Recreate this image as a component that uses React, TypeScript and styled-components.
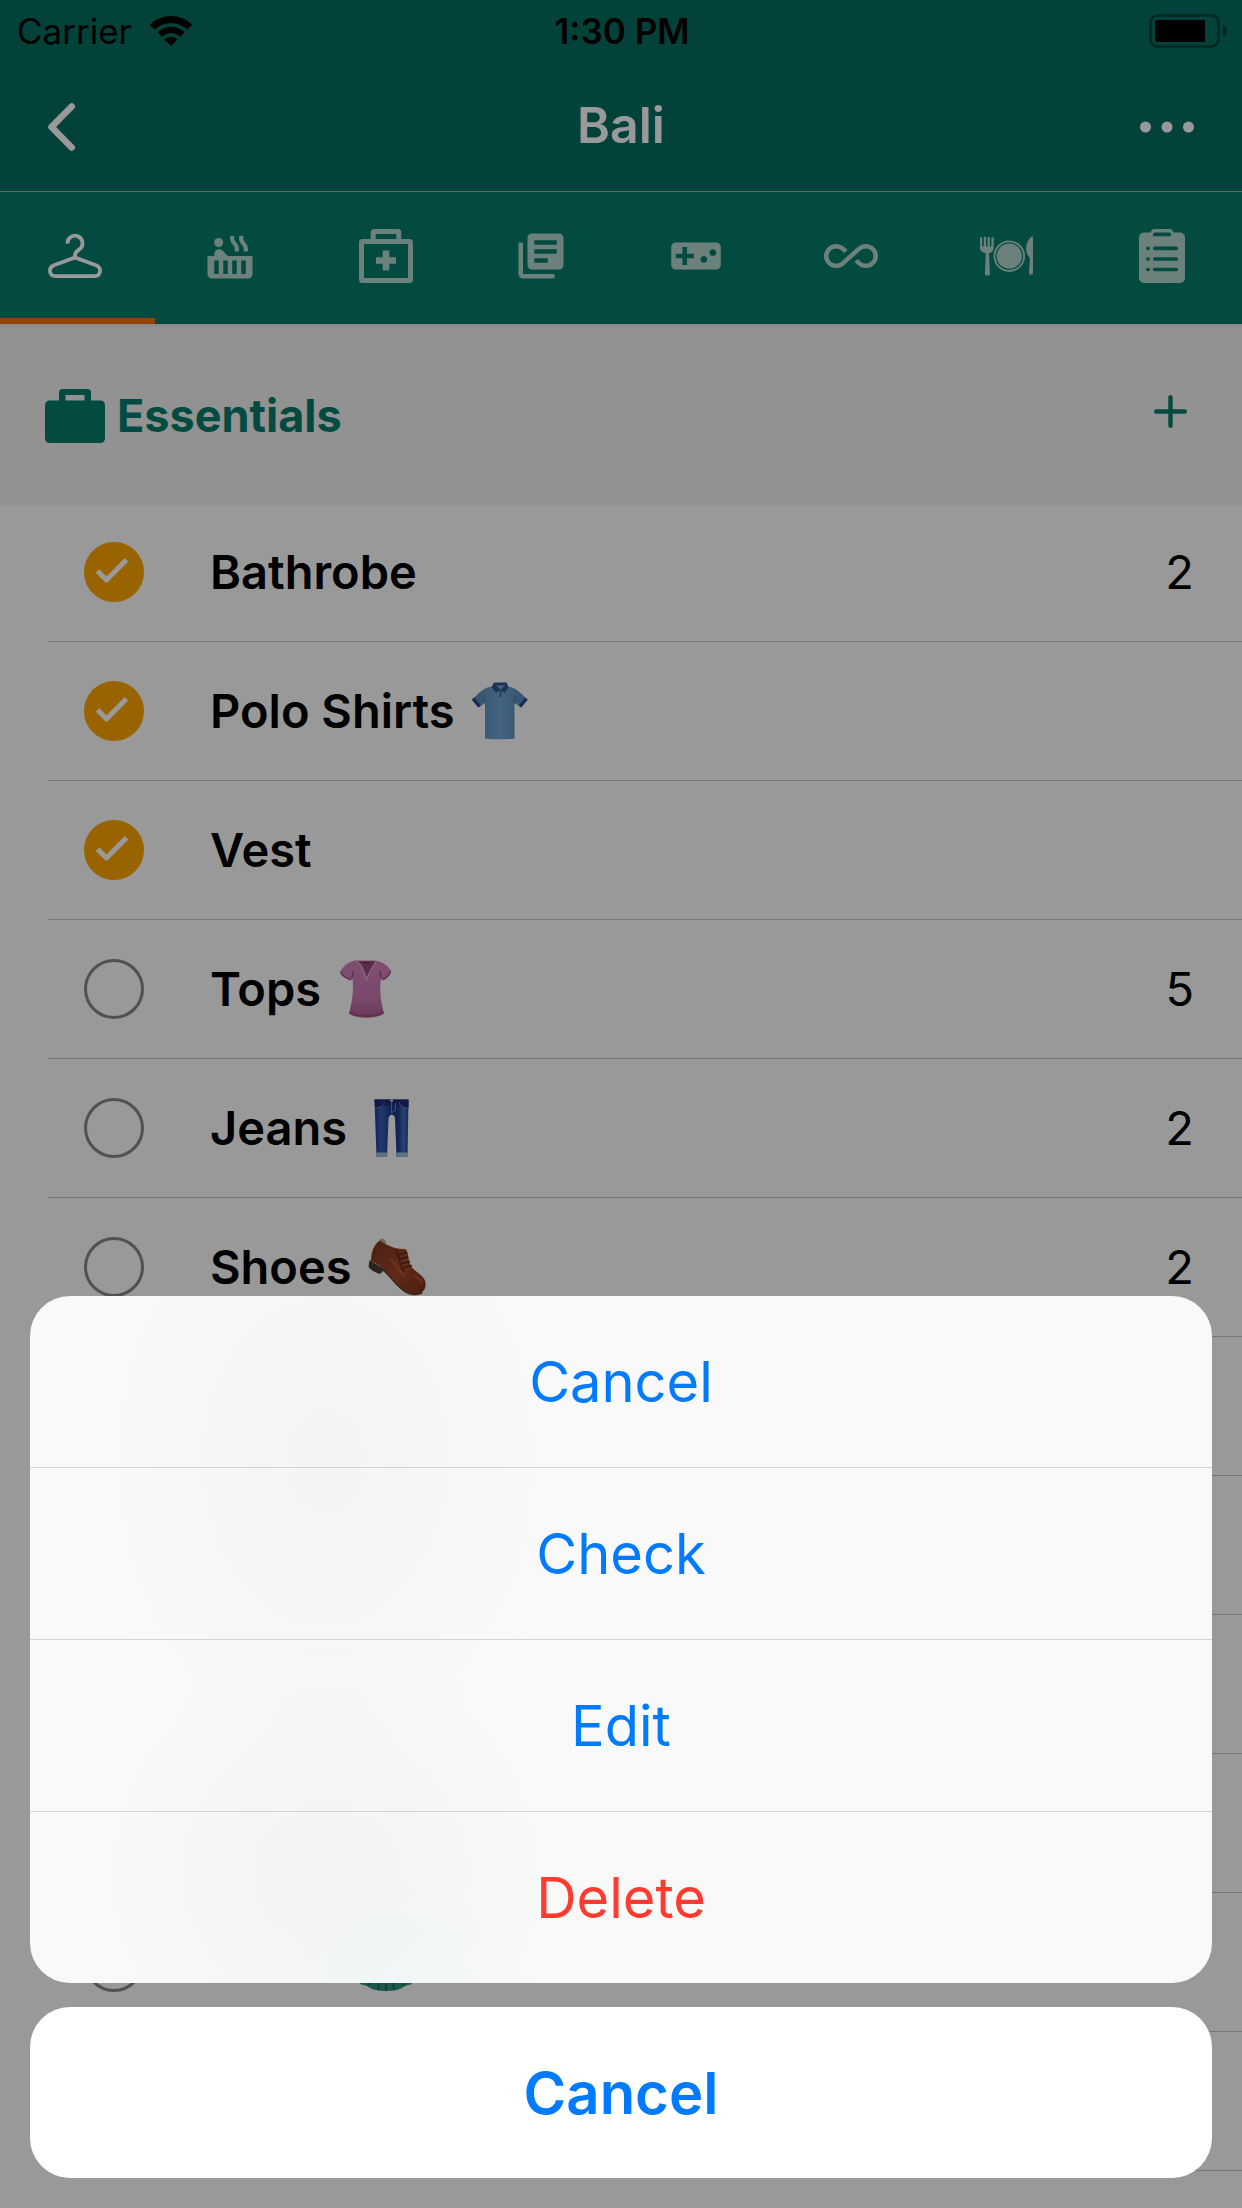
import React, { useState } from "react";
import styled, { createGlobalStyle } from "styled-components";
import {
  MdAllInclusive,
  MdHotTub,
  MdLibraryBooks,
  MdVideogameAsset,
} from "react-icons/md";

const teal = "#057d6c";
const tealDark = "#056e61";

const GlobalStyle = createGlobalStyle`
  *, *::before, *::after { box-sizing: border-box; }
  body {
    margin: 0;
    background: #fff;
    color: #000;
    font-family: Inter, "Liberation Sans", sans-serif;
  }
  button {
    margin: 0;
    padding: 0;
    border: 0;
    background: none;
    color: inherit;
    font: inherit;
    cursor: pointer;
  }
  svg { display: block; flex: none; }
`;

const Page = styled.div`
  min-height: 100vh;
  display: flex;
  flex-direction: column;
`;

const TopBar = styled.header`
  background: ${tealDark};
  border-bottom: 1px solid #a7a7ab;
`;

const StatusBar = styled.div`
  display: grid;
  grid-template-columns: 1fr auto 1fr;
  align-items: center;
  height: 60px;
  padding: 2px 15px 0 17px;
  font-size: 35px;
  line-height: 40px;
`;

const Carrier = styled.div`
  display: flex;
  align-items: center;
  gap: 18px;
`;

const Clock = styled.time`
  font-weight: 600;
`;

const BatterySlot = styled.div`
  display: flex;
  justify-content: flex-end;
`;

const NavBar = styled.nav`
  display: grid;
  grid-template-columns: 1fr auto 1fr;
  align-items: center;
  height: 131px;
  padding: 2px 48px 0;
  color: #fff;
`;

const Title = styled.h1`
  margin: 0;
  padding-bottom: 4px;
  font-size: 50px;
  line-height: 60px;
  font-weight: 600;
`;

const NavButton = styled.button<{ $end?: boolean }>`
  justify-self: ${(p) => (p.$end ? "end" : "start")};
`;

const Tabs = styled.div`
  display: grid;
  grid-template-columns: repeat(8, 1fr);
  height: 132px;
  background: ${teal};
`;

const Tab = styled.button<{ $active: boolean }>`
  display: flex;
  align-items: center;
  justify-content: center;
  padding: 0 5px 5px 0;
  color: ${(p) => (p.$active ? "#fff" : "#b4d7cf")};
  box-shadow: ${(p) => (p.$active ? "inset 0 -6px #fa6e00" : "none")};
`;

const SectionHeader = styled.div`
  position: relative;
  z-index: 1;
  display: flex;
  align-items: center;
  gap: 12px;
  height: 181px;
  margin-bottom: -2px;
  padding: 2px 55px 0 45px;
  background: linear-gradient(#e4e4e4, #f3f3f3 4px);
  color: ${teal};
`;

const SectionTitle = styled.h2`
  flex: 1;
  margin: 0;
  font-size: 45px;
  line-height: 54px;
  font-weight: 700;
`;

const AddButton = styled.button`
  padding-bottom: 8px;
`;

const List = styled.ul`
  margin: 0;
  padding: 0 0 0 48px;
  list-style: none;
`;

const Row = styled.li`
  display: flex;
  align-items: center;
  height: 139px;
  padding: 0 48px 0 36px;
  border-bottom: 1px solid #c8c7cc;
  font-size: 47px;
  line-height: 58px;
`;

const ItemLabel = styled.label`
  display: flex;
  flex: 1;
  align-items: center;
`;

const TickCell = styled.span`
  display: grid;
  margin-right: 66px;
  > * { grid-area: 1 / 1; }
  svg { pointer-events: none; }
`;

const Tick = styled.input`
  appearance: none;
  width: 60px;
  height: 60px;
  margin: 0;
  border: 3px solid #878787;
  border-radius: 50%;
  &:checked {
    border-color: #ffa500;
    background: #ffa500;
  }
`;

const ItemName = styled.span<{ $width?: number }>`
  min-width: ${(p) => (p.$width ? `${p.$width}px` : "0")};
  margin-right: 15px;
  font-weight: 600;
`;

const Quantity = styled.span``;

const Backdrop = styled.div`
  position: fixed;
  inset: 0;
  z-index: 2;
  display: flex;
  flex-direction: column;
  justify-content: flex-end;
  gap: 24px;
  padding: 30px;
  background: rgba(0, 0, 0, 0.4);
`;

const ActionGroup = styled.div`
  overflow: hidden;
  border-radius: 40px;
  background:
    radial-gradient(circle at 31% 100%, rgba(232, 246, 250, 0.4), transparent 130px),
    radial-gradient(ellipse 240px 320px at 25% 24%, #f4f4f4, transparent),
    radial-gradient(ellipse 240px 240px at 25% 84%, #f3f3f3, transparent),
    #f9f9f9;
`;

const Action = styled.button<{ $danger?: boolean; $strong?: boolean }>`
  display: block;
  width: 100%;
  height: 171px;
  font-size: ${(p) => (p.$strong ? 58 : 56)}px;
  line-height: 72px;
  font-weight: ${(p) => (p.$strong ? 600 : 400)};
  color: ${(p) => (p.$danger ? "#ff3b30" : "#007aff")};
  & + & {
    height: 172px;
    border-top: 1px solid #d3d3d3;
  }
`;

const CancelCard = styled.div`
  overflow: hidden;
  border-radius: 40px;
  background: #fff;
`;

const WifiIcon = () => (
  <svg width="42" height="30" viewBox="0 0 42 30" fill="none" stroke="#000" aria-hidden="true">
    <path d="M2.3 11.3a26.5 26.5 0 0 1 37.4 0" strokeWidth="7" />
    <path d="M9.7 18.7a16 16 0 0 1 22.6 0" strokeWidth="6.6" />
    <path d="M21 30l-6.6-6.6a9.3 9.3 0 0 1 13.2 0z" fill="#000" stroke="none" />
  </svg>
);

const BatteryIcon = () => (
  <svg width="78" height="34" viewBox="0 0 78 34" aria-label="Battery">
    <rect x="1.5" y="1.5" width="68" height="31" rx="7" fill="none" stroke="#000" strokeOpacity="0.4" strokeWidth="2.6" />
    <path d="M9 6h47v22H9a3 3 0 0 1-3-3V9a3 3 0 0 1 3-3z" />
    <path d="M74 11c5 2 5 10 0 12z" fillOpacity="0.4" />
  </svg>
);

const BackIcon = () => (
  <svg width="28" height="50" viewBox="0 0 28 50" fill="none" stroke="currentColor" strokeWidth="6.6" strokeLinecap="round" strokeLinejoin="round" aria-hidden="true">
    <path d="M23.7 4.5L3.5 25l20.200 20.500" />
  </svg>
);

const MoreIcon = () => (
  <svg width="54" height="12" viewBox="0 0 54 12" fill="currentColor" aria-hidden="true">
    <circle cx="5.5" cy="6" r="5.5" />
    <circle cx="27" cy="6" r="5.5" />
    <circle cx="48.5" cy="6" r="5.5" />
  </svg>
);

const HangerIcon = () => (
  <svg width="54" height="54" viewBox="0 0 54 54" fill="none" stroke="currentColor" strokeWidth="3.8" strokeLinejoin="round" aria-hidden="true">
    <path d="M19.5 14.6A7.5 7.5 0 1 1 31.4 20.3C28.5 22.2 27 23.5 27 26v2.5" />
    <path d="M27 28.5L6 36.2C3 37.4 1.9 39.2 1.9 41.6 1.9 45 4 47.2 7.2 47.2h39.6c3.2 0 5.3-2.2 5.3-5.6 0-2.4-1.2-4.2-4.1-5.4z" />
  </svg>
);

const MedicalIcon = () => (
  <svg width="54" height="54" viewBox="0 0 54 54" fill="none" stroke="currentColor" strokeWidth="5" aria-hidden="true">
    <rect x="2.5" y="12.5" width="49" height="39" rx="1" />
    <path d="M14.2 12V3.5a1 1 0 0 1 1-1h23.6a1 1 0 0 1 1 1V12" />
    <path d="M27 21.5v20M17 31.5h20" strokeWidth="6.6" />
  </svg>
);

const DiningIcon = () => (
  <svg width="54" height="54" viewBox="0 0 54 54" fill="currentColor" aria-hidden="true">
    <circle cx="29.3" cy="27.2" r="12.6" />
    <circle cx="29.3" cy="27.2" r="14.8" fill="none" stroke="currentColor" strokeWidth="1.9" />
    <path d="M0 9c0-1 2.200-1 2.200 0v8.500h1.600V8.500c0-1 2.200-1 2.200 0v9h1.600v-9c0-1 2.200-1 2.200 0v9h1.600V9c0-1 2.300-1 2.300 0v10c0 3-2 4.500-4.700 5.300l.9 20.700c0 2-5 2-5 0l.9-20.700C2 23.500 0 22 0 19z" />
    <path d="M53 8v36c0 2.200-4 2.200-4 0l.9-15c-2.600-3-3.700-5-3.700-9 0-5.500 2.500-10.500 5.300-12.300.8-.5 1.500-.3 1.500.3z" />
  </svg>
);

const ClipboardIcon = () => (
  <svg width="54" height="54" viewBox="0 0 54 54" aria-hidden="true">
    <path fill="currentColor" fillRule="evenodd" d="M9 3.5h6.5C16.5 1 17.5 0 19.5 0h15c2 0 3 1 4 3.5H45a5 5 0 0 1 5 5V49a5 5 0 0 1-5 5H9a5 5 0 0 1-5-5V8.500a5 5 0 0 1 5-5zM20 3.500a2 2 0 0 0-2 2v1.700h18V5.500a2 2 0 0 0-2-2z" />
    <g stroke={teal} strokeWidth="3.7" strokeLinecap="round">
      <path d="M19.800 19.300h21.400M19.800 30h21.400M19.800 40.500h21.400M13 19.300h.1M13 30h.1M13 40.500h.1" />
    </g>
  </svg>
);

const BriefcaseIcon = () => (
  <svg width="60" height="54" viewBox="0 0 60 54" fill="currentColor" aria-hidden="true">
    <path fillRule="evenodd" d="M17.500 0h25A3.500 3.500 0 0 1 46 3.500v8h9.500A4.500 4.500 0 0 1 60 16v33.500a4.500 4.500 0 0 1-4.500 4.500h-51A4.500 4.500 0 0 1 0 49.500V16a4.500 4.500 0 0 1 4.500-4.500H14v-8A3.500 3.500 0 0 1 17.500 0zM20.500 6v5.500h19V6z" />
  </svg>
);

const PlusIcon = () => (
  <svg width="33" height="33" viewBox="0 0 33 33" stroke="currentColor" strokeWidth="4.4" strokeLinecap="round" aria-hidden="true">
    <path d="M16.500 2.200v28.600M2.200 16.500h28.600" />
  </svg>
);

const CheckMark = () => (
  <svg width="60" height="60" viewBox="0 0 60 60" fill="none" stroke="#fff" strokeWidth="5" strokeLinejoin="round" aria-hidden="true">
    <path d="M13.500 29l9 9L42.500 17.800" />
  </svg>
);

const PoloShirt = () => (
  <svg width="60" height="60" viewBox="0 0 60 60" role="img" aria-label="Polo shirt">
    <defs>
      <linearGradient id="polo" x1="0" x2="1">
        <stop offset="0" stopColor="#5587bb" />
        <stop offset="0.5" stopColor="#70a5d2" />
        <stop offset="1" stopColor="#5587bb" />
      </linearGradient>
    </defs>
    <path fill="url(#polo)" d="M22 5.500c-7 1-10 3-20 13.500l6.500 7.500L15 22v35.500c0 1 29.500 1 29.500 0V22l6.500 4.500 6.500-7.500C48 9 45 6.500 37.500 5.500z" />
    <path d="M15 22l-1-8M44.500 22l1-8" stroke="#48769f" strokeWidth="1" />
    <path d="M3 17.500l6.500 8M56.500 17.500l-6.500 8" stroke="#27468f" strokeWidth="3" />
    <path fill="#2c5592" d="M24 1.500h12.500l2 4.500-4 6-4-3.500-4.500 3.500-4.500-6z" />
    <path fill="#80a7c8" d="M26 4.500h9l-4.500 4z" />
    <path d="M30.500 8v8" stroke="#36658f" strokeWidth="2" />
  </svg>
);

const Blouse = () => (
  <svg width="60" height="60" viewBox="0 0 60 60" role="img" aria-label="Top">
    <defs>
      <linearGradient id="blouse" x1="0" x2="0" y1="0" y2="1">
        <stop offset="0" stopColor="#d583bd" />
        <stop offset="0.7" stopColor="#c978b0" />
        <stop offset="1" stopColor="#b05a92" />
      </linearGradient>
    </defs>
    <path fill="url(#blouse)" d="M19 1.500C12 3 8 6 4 13c2 4 6 7 11 8.500l1.500-2c1.500 13-.5 24-3.500 35 6 5.500 29 5.500 35 0-3-12-5-22-3-35l1.500 2c4-1.500 7-4.500 9-9C51.500 6 47 3 40 1.500z" />
    <path fill="#9a4b7c" d="M21 2h18c-1 6-4 11-8.500 16C28 11 26 6 21 2z" />
    <path fill="none" stroke="#e9a6d5" strokeWidth="1.2" d="M20 2c6 3 8 10 10.500 20C32 13 37 9 40 2" />
    <path fill="none" stroke="#9c487f" strokeWidth="1.3" d="M4.500 13.500c2 4 6 6 10.500 7.500M46.500 20.500c4-1 6.500-4 8-8M13.500 53c7 5.500 27 5.500 34 0M16 19l1-7M45 19l-1-7" />
    <path fill="#7d355f" d="M27.500 3h6v2h-6z" />
  </svg>
);

const Jeans = () => (
  <svg width="60" height="60" viewBox="0 0 60 60" role="img" aria-label="Jeans">
    <defs>
      <linearGradient id="denim" x1="0" x2="1">
        <stop offset="0" stopColor="#1d3794" />
        <stop offset="0.2" stopColor="#3566b4" />
        <stop offset="0.45" stopColor="#203a92" />
        <stop offset="0.7" stopColor="#203a92" />
        <stop offset="0.85" stopColor="#3d73bc" />
        <stop offset="1" stopColor="#244398" />
      </linearGradient>
    </defs>
    <path fill="url(#denim)" d="M12.500 1.500h34l-1 57H34.500l-1.500-38c-.5-5-6-5-6.500 0l-1.500 38H14.500z" />
    <path fill="#1b2a78" d="M12.500 1.500h34v9l-9-3h-15l-9.500 3z" />
    <path fill="none" stroke="#8188a8" strokeWidth="0.9" d="M13 10c5 0 8-2 9.500-6M46 10c-5 0-8-2-9-6M29.500 4v11l4-3V5" />
    <path d="M28 2.500h3" stroke="#ccd7e2" strokeWidth="2" />
    <path fill="#9cc4df" d="M14 54.500h11.500v4H14.500zM34.500 54.500h11.500l-.5 4h-11z" />
  </svg>
);

const Shoe = () => (
  <svg width="60" height="60" viewBox="0 0 60 60" role="img" aria-label="Shoe">
    <defs>
      <linearGradient id="leather" x1="0" y1="0" x2="1" y2="1">
        <stop offset="0" stopColor="#7c341f" />
        <stop offset="0.55" stopColor="#a3482a" />
        <stop offset="1" stopColor="#7a301b" />
      </linearGradient>
    </defs>
    <path fill="#4d3d32" d="M2.500 23l-1 7c3 4 7 5.500 11.500 7l3-3c8 7 12 14 20 20 7 5.500 16 5 20 2z" />
    <path fill="url(#leather)" d="M4 24c0-9 3-17 9-20.500C20 8 27 12.500 38 12c3 .5 3 8 5 15 2.500 7 12 9.500 15 16.500 3 10-5 16-14 13.500C29 52 24 33 4 24z" />
    <path fill="#bda583" d="M12 3.500c3-3.500 7-1.500 7.500 4.500-2.500-2.500-4.500-3.500-7.500-4.500z" />
    <path fill="none" stroke="#622312" strokeWidth="1.5" d="M29 13c4 7 3 14 8 22M32 17.500l8-2M33 22l8-2M35 26.500l8-2M37 30.500l8-2" />
    <path fill="none" stroke="#cb7043" strokeWidth="2" opacity="0.5" d="M23 22c6 5 9 12 15 17M46 39c4 1 7 3 9 7" />
  </svg>
);

const Dress = () => (
  <svg width="60" height="60" viewBox="0 0 60 60" role="img" aria-label="Dress">
    <path fill="#2a9583" d="M20 2h20l-2 20 18 30-7 2-5 3c-6 2.500-22 2.500-28 0l-5-3-7-2 18-30z" />
    <path fill="none" stroke="#17614f" strokeWidth="1.5" d="M12 54l8-28M22 58l4-32M30 59V26M38 58l-4-32M48 54l-8-28" />
  </svg>
);

const tabs = [
  { label: "Clothes", icon: <HangerIcon /> },
  { label: "Toiletries", icon: <MdHotTub size={54} /> },
  { label: "Health", icon: <MedicalIcon /> },
  { label: "Documents", icon: <MdLibraryBooks size={54} /> },
  { label: "Entertainment", icon: <MdVideogameAsset size={54} /> },
  { label: "Miscellaneous", icon: <MdAllInclusive size={54} /> },
  { label: "Food", icon: <DiningIcon /> },
  { label: "Tasks", icon: <ClipboardIcon /> },
];

type Item = {
  name?: string;
  nameWidth?: number;
  picture?: React.ReactNode;
  quantity?: number;
  packed?: boolean;
};

const initialItems: Item[] = [
  { name: "Bathrobe", quantity: 2, packed: true },
  { name: "Polo Shirts", picture: <PoloShirt />, packed: true },
  { name: "Vest", packed: true },
  { name: "Tops", picture: <Blouse />, quantity: 5 },
  { name: "Jeans", picture: <Jeans />, quantity: 2 },
  { name: "Shoes", picture: <Shoe />, quantity: 2 },
  {},
  {},
  {},
  {},
  { nameWidth: 131, picture: <Dress /> },
  {},
];

export default function App() {
  const [activeTab, setActiveTab] = useState(0);
  const [items, setItems] = useState(initialItems);

  const toggle = (index: number) =>
    setItems((list) =>
      list.map((item, i) => (i === index ? { ...item, packed: !item.packed } : item)),
    );

  return (
    <>
      <GlobalStyle />
      <Page>
        <TopBar>
          <StatusBar>
            <Carrier>
              <span>Carrier</span>
              <WifiIcon />
            </Carrier>
            <Clock>1:30 PM</Clock>
            <BatterySlot>
              <BatteryIcon />
            </BatterySlot>
          </StatusBar>
          <NavBar>
            <NavButton aria-label="Back">
              <BackIcon />
            </NavButton>
            <Title>Bali</Title>
            <NavButton $end aria-label="More">
              <MoreIcon />
            </NavButton>
          </NavBar>
        </TopBar>

        <Tabs role="tablist">
          {tabs.map((tab, i) => (
            <Tab
              key={tab.label}
              role="tab"
              aria-label={tab.label}
              aria-selected={i === activeTab}
              $active={i === activeTab}
              onClick={() => setActiveTab(i)}
            >
              {tab.icon}
            </Tab>
          ))}
        </Tabs>

        <main>
          <SectionHeader>
            <BriefcaseIcon />
            <SectionTitle>Essentials</SectionTitle>
            <AddButton aria-label="Add item">
              <PlusIcon />
            </AddButton>
          </SectionHeader>
          <List>
            {items.map((item, i) => (
              <Row key={i}>
                <ItemLabel>
                  <TickCell>
                    <Tick
                      type="checkbox"
                      aria-label={item.name ?? "Item"}
                      checked={!!item.packed}
                      onChange={() => toggle(i)}
                    />
                    {item.packed && <CheckMark />}
                  </TickCell>
                  <ItemName $width={item.nameWidth}>{item.name}</ItemName>
                  {item.picture}
                </ItemLabel>
                {item.quantity && <Quantity>{item.quantity}</Quantity>}
              </Row>
            ))}
          </List>
        </main>
      </Page>

      <Backdrop role="dialog" aria-label="Item actions">
        <ActionGroup>
          <Action>Cancel</Action>
          <Action>Check</Action>
          <Action>Edit</Action>
          <Action $danger>Delete</Action>
        </ActionGroup>
        <CancelCard>
          <Action $strong>Cancel</Action>
        </CancelCard>
      </Backdrop>
    </>
  );
}
